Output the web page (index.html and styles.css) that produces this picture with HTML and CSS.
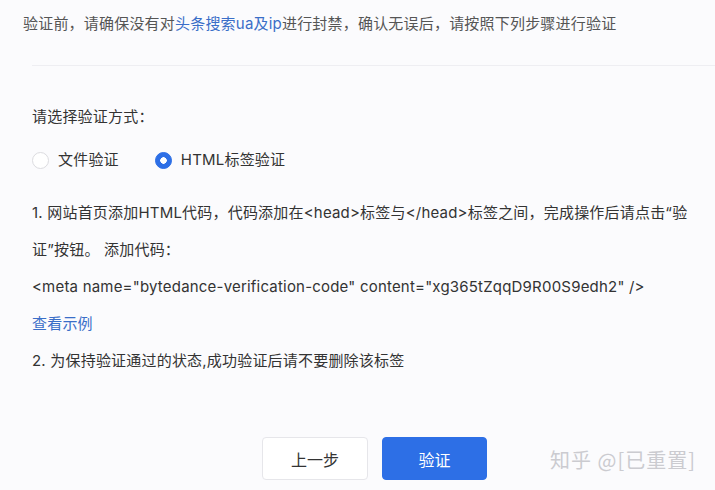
FILE: index.html
```html
<!DOCTYPE html>
<html lang="zh-CN">
<head>
    <meta charset="UTF-8">
    <meta name="viewport" content="width=device-width, initial-scale=1.0">
    <title>HTML标签验证</title>
    <link rel="stylesheet" href="styles.css">
</head>
<body>
    <p class="intro">验证前，请确保没有对<a class="link" href="#">头条搜索ua及ip</a>进行封禁，确认无误后，请按照下列步骤进行验证</p>
    <div class="divider"></div>

    <div class="form">
        <div class="label">请选择验证方式：</div>
        <div class="radios">
            <label class="radio"><span class="dot"></span>文件验证</label>
            <label class="radio checked"><span class="dot"></span>HTML标签验证</label>
        </div>

        <div class="steps">
            <p>1. 网站首页添加HTML代码，代码添加在&lt;head&gt;标签与&lt;/head&gt;标签之间，完成操作后请点击“验证”按钮。 添加代码：</p>
            <p>&lt;meta name="bytedance-verification-code" content="xg365tZqqD9R00S9edh2" /&gt;</p>
            <p><a class="link" href="#">查看示例</a></p>
            <p>2. 为保持验证通过的状态,成功验证后请不要删除该标签</p>
        </div>
    </div>

    <div class="actions">
        <button class="btn">上一步</button>
        <button class="btn primary">验证</button>
        <span class="watermark">知乎 @[已重置]</span>
    </div>
</body>
</html>
```

FILE: styles.css
```css
body {
    margin: 0;
    background-color: #fbfbfd;
    font-family: Inter, "Noto Sans CJK SC", sans-serif;
    font-size: 15px;
    letter-spacing: 0.2px;
    color: #333;
    width: 715px;
    height: 490px;
    overflow: hidden;
    position: relative;
}
p {
    margin: 0;
}
.link {
    color: #3a6ec8;
    text-decoration: none;
}
.intro {
    padding: 14px 0 0 23px;
    line-height: 20px;
    color: #555;
}
.divider {
    margin: 31px 0 0 32px;
    height: 1px;
    background-color: #eeeef2;
}
.form {
    padding-left: 32px;
}
.label {
    margin-top: 40px;
    line-height: 22px;
}
.radios {
    display: flex;
    align-items: center;
    gap: 36px;
    margin-top: 21px;
    height: 22px;
}
.radio {
    display: flex;
    align-items: center;
    gap: 9px;
    line-height: 22px;
}
.dot {
    width: 15px;
    height: 15px;
    border: 1px solid #dcdce0;
    border-radius: 50%;
    background-color: #fff;
    box-sizing: content-box;
}
.radio.checked .dot {
    border-color: #2d6fe6;
    background-color: #2d6fe6;
    background-image: radial-gradient(circle, #fff 0 3px, transparent 3.5px);
}
.steps {
    margin-top: 23px;
    padding-right: 14px;
    line-height: 37px;
}
.actions {
    display: flex;
    gap: 14px;
    padding-left: 262px;
    margin-top: 58px;
}
.btn {
    width: 106px;
    height: 43px;
    border: 1px solid #e6e6ea;
    border-radius: 4px;
    background-color: #fff;
    font-family: "Noto Sans CJK SC", sans-serif;
    font-size: 16px;
    color: #333;
}
.btn.primary {
    width: 105px;
    border-color: #2d6fe6;
    background-color: #2d6fe6;
    color: #fff;
}
.watermark {
    position: absolute;
    left: 550px;
    top: 445px;
    font-family: "Noto Sans CJK SC", sans-serif;
    font-size: 20px;
    line-height: 30px;
    color: #cbcbd0;
    letter-spacing: 1px;
}
```
